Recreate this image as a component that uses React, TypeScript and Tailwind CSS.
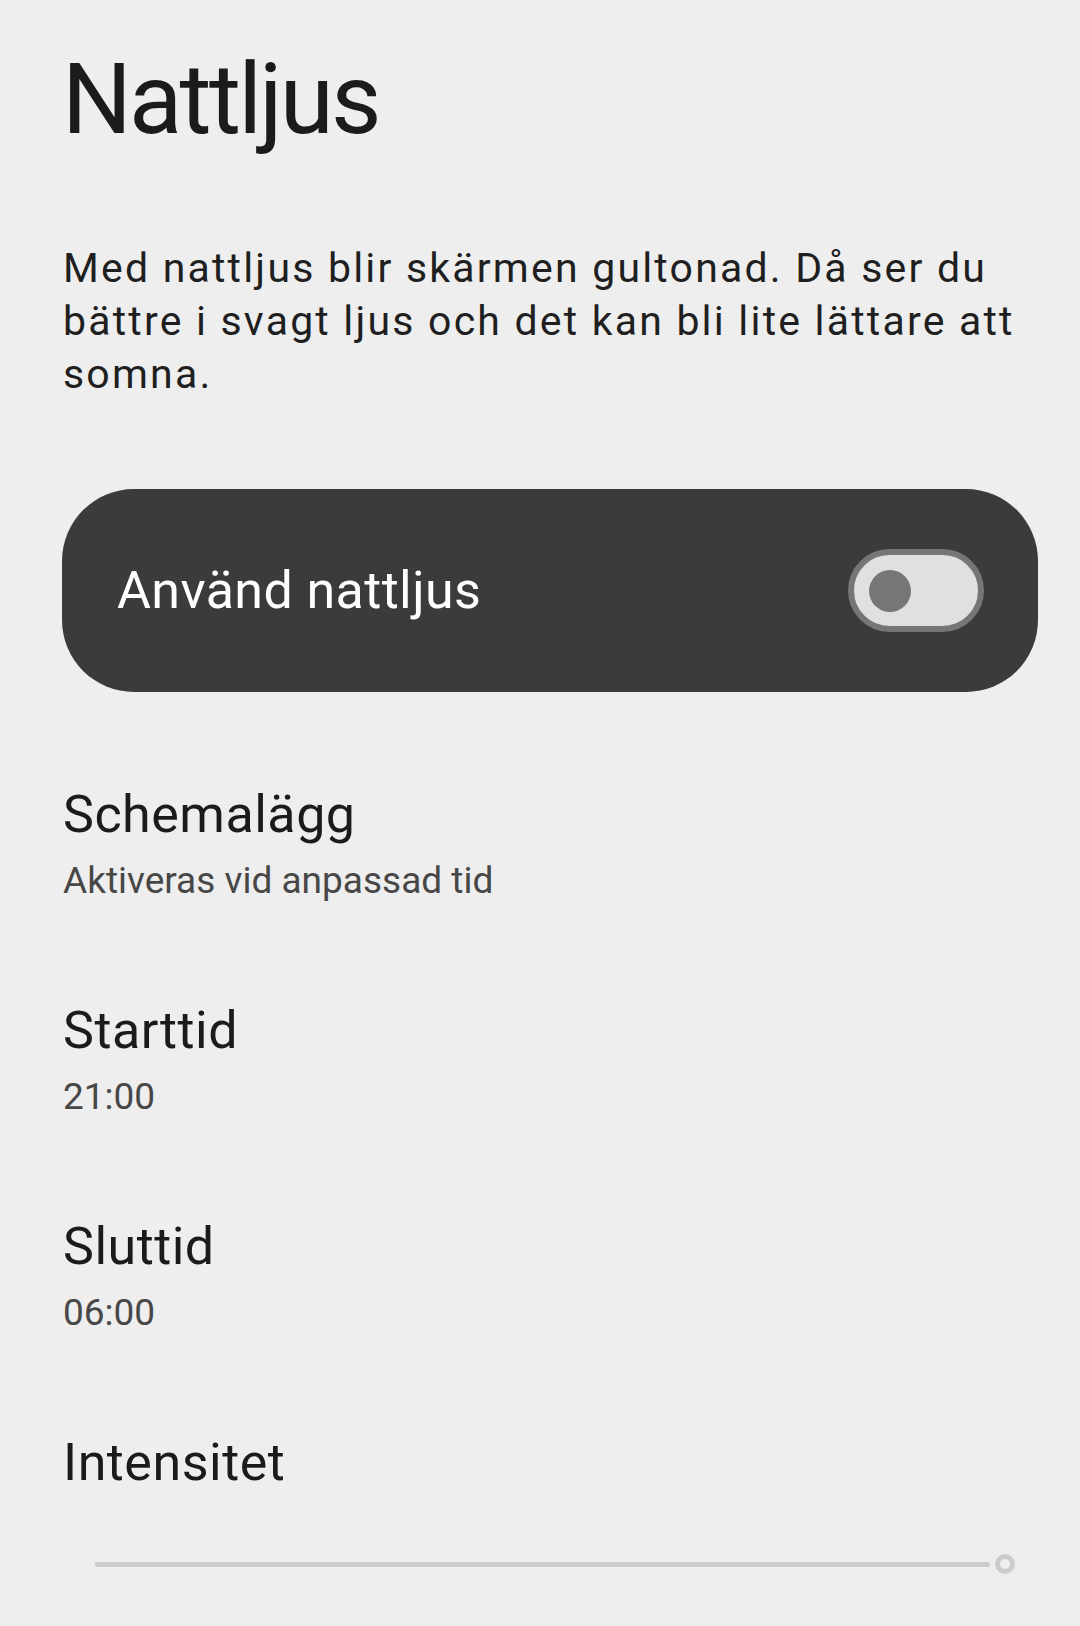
import { useState } from 'react';

// ─── Settings rows ───────────────────────────────────────────────────────────

const rows = [
  { title: 'Schemalägg', value: 'Aktiveras vid anpassad tid' },
  { title: 'Starttid', value: '21:00' },
  { title: 'Sluttid', value: '06:00' },
];

function SettingRow({ title, value }: { title: string; value: string }) {
  return (
    <div className="flex flex-col px-[63px] pb-[94px]">
      <p className="text-[52px] leading-[62px] tracking-[0.5px] text-[#1b1b1b]">{title}</p>
      <p className="mt-[10px] text-[37px] leading-[50px] text-[#474747]">{value}</p>
    </div>
  );
}

// ─── Toggle ──────────────────────────────────────────────────────────────────

function Toggle({ on, onChange }: { on: boolean; onChange: (v: boolean) => void }) {
  return (
    <button
      onClick={() => onChange(!on)}
      className="flex h-[83px] w-[136px] items-center rounded-full border-[6px] border-[#767676] bg-[#e0e0e0] px-[15px]"
    >
      <span className="h-[42px] w-[42px] rounded-full bg-[#767676]" />
    </button>
  );
}

// ─── Page ────────────────────────────────────────────────────────────────────

export default function App() {
  const [enabled, setEnabled] = useState(false);

  return (
    <div
      className="flex min-h-[1626px] w-[1080px] flex-col bg-[#eeeeee]"
      style={{ fontFamily: 'Roboto, "Noto Sans", sans-serif' }}
    >
      <h1 className="px-[62px] pt-[50px] text-[98px] leading-[100px] tracking-[-2.8px] text-[#1b1b1b]">Nattljus</h1>

      <p className="mt-[92px] px-[63px] text-[41px] leading-[53px] tracking-[2.2px] text-[#1f1f1f]">
        Med nattljus blir skärmen gultonad. Då ser du bättre i svagt ljus och det kan bli lite lättare att
        somna.
      </p>

      <div className="ml-[62px] mr-[42px] mt-[88px] flex h-[203px] items-center justify-between rounded-[72px] bg-[#3b3b3b] pl-[55px] pr-[54px]">
        <span className="text-[52px] leading-[60px] tracking-[0.4px] text-white">Använd nattljus</span>
        <Toggle on={enabled} onChange={setEnabled} />
      </div>

      <div className="mt-[92px] flex flex-col">
        {rows.map((r) => (
          <SettingRow key={r.title} title={r.title} value={r.value} />
        ))}
        <div className="flex flex-col px-[63px]">
          <p className="text-[52px] leading-[62px] tracking-[0.5px] text-[#1b1b1b]">Intensitet</p>
          <div className="mt-[60px] flex items-center pl-[32px] pr-[2px]">
            <div className="h-[5px] flex-1 rounded-full bg-[#cccccc]" />
            <div className="ml-[5px] h-[20px] w-[20px] rounded-full border-[5px] border-[#cccccc]" />
          </div>
        </div>
      </div>
    </div>
  );
}
